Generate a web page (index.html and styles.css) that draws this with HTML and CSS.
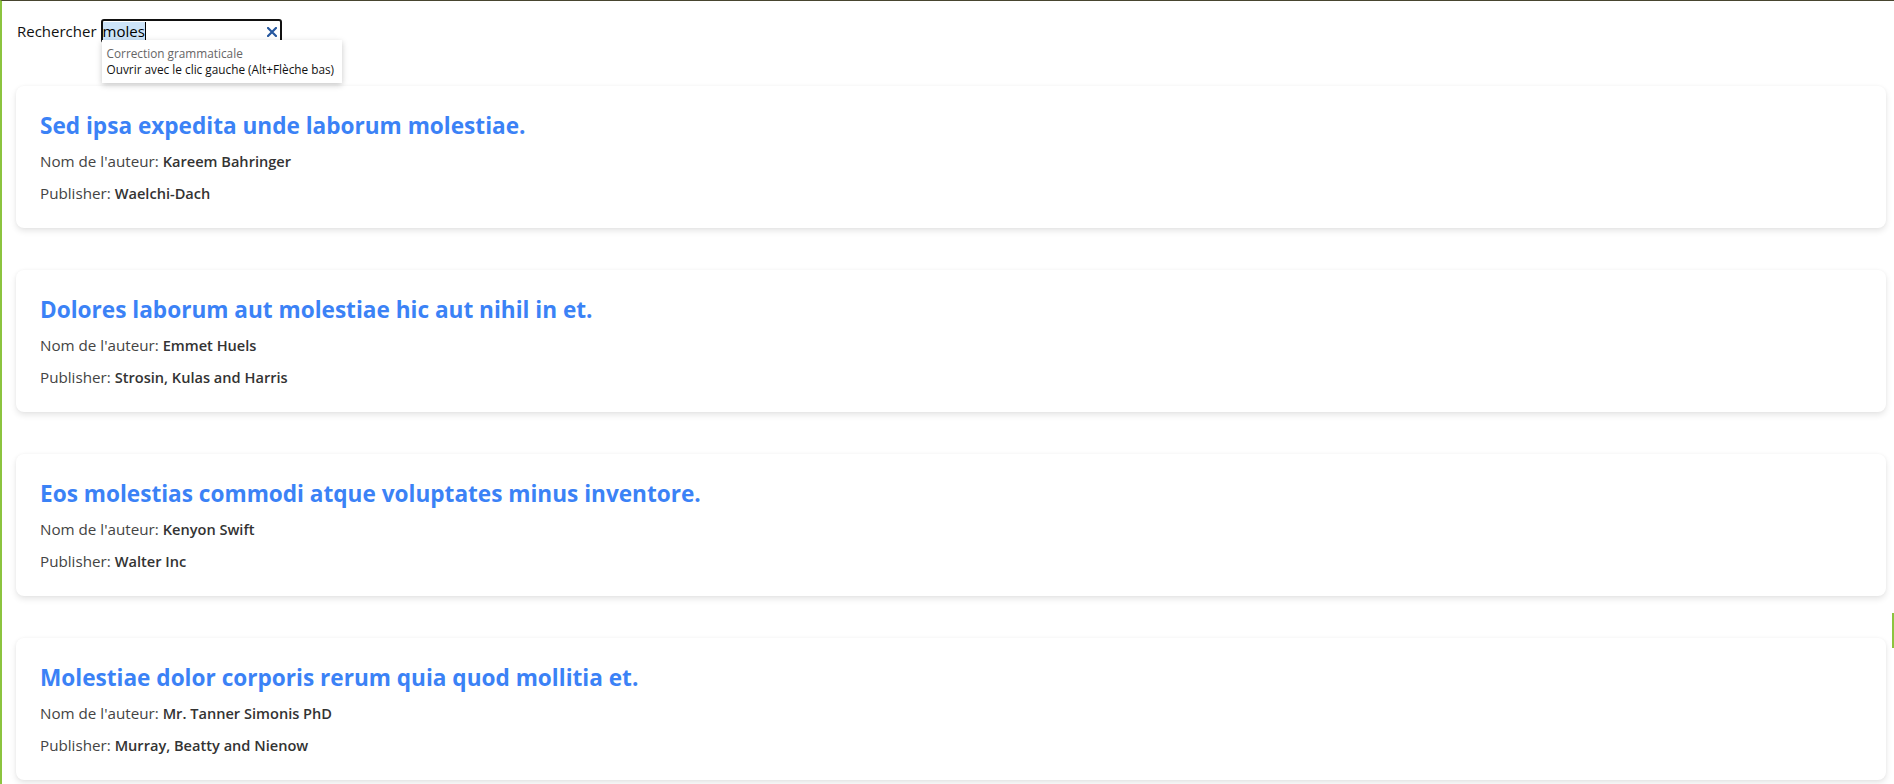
FILE: index.html
```html
<!DOCTYPE html>
<html lang="fr">
<head>
<meta charset="utf-8">
<title>Livres</title>
<link rel="stylesheet" href="styles.css">
</head>
<body>
<div class="page">
  <div class="search">
    <label class="search-label" for="q">Rechercher</label>
    <div class="input-wrap">
      <div class="input" id="q"><span class="sel">moles</span><span class="caret"></span></div>
      <span class="clear" aria-label="Effacer">
        <svg width="10" height="10" viewBox="0 0 10 10"><path d="M1 1 L9 9 M9 1 L1 9" stroke="#25579f" stroke-width="2.2" stroke-linecap="square"/></svg>
      </span>
      <div class="suggest">
        <div class="suggest-title">Correction grammaticale</div>
        <div class="suggest-item">Ouvrir avec le clic gauche (Alt+Flèche bas)</div>
      </div>
    </div>
  </div>

  <div class="list">
    <div class="card">
      <h2 class="card-title">Sed ipsa expedita unde laborum molestiae.</h2>
      <p class="card-line">Nom de l'auteur: <strong>Kareem Bahringer</strong></p>
      <p class="card-line">Publisher: <strong>Waelchi-Dach</strong></p>
    </div>
    <div class="card">
      <h2 class="card-title">Dolores laborum aut molestiae hic aut nihil in et.</h2>
      <p class="card-line">Nom de l'auteur: <strong>Emmet Huels</strong></p>
      <p class="card-line">Publisher: <strong>Strosin, Kulas and Harris</strong></p>
    </div>
    <div class="card">
      <h2 class="card-title">Eos molestias commodi atque voluptates minus inventore.</h2>
      <p class="card-line">Nom de l'auteur: <strong>Kenyon Swift</strong></p>
      <p class="card-line">Publisher: <strong>Walter Inc</strong></p>
    </div>
    <div class="card">
      <h2 class="card-title">Molestiae dolor corporis rerum quia quod mollitia et.</h2>
      <p class="card-line">Nom de l'auteur: <strong>Mr. Tanner Simonis PhD</strong></p>
      <p class="card-line">Publisher: <strong>Murray, Beatty and Nienow</strong></p>
    </div>
  </div>
</div>
<div class="edge-mark"></div>
</body>
</html>
```

FILE: styles.css
```css
* { box-sizing: border-box; }

html, body {
  margin: 0;
  padding: 0;
  height: 100%;
  overflow: hidden;
  background: #ffffff;
}

body {
  font-family: "Segoe UI", "Open Sans", "Noto Sans", sans-serif;
  color: #333;
  border-left: 2px solid #8cc43f;
  border-top: 1px solid #48452f;
}

.page {
  padding: 0 8px 0 14px;
}

.search {
  display: flex;
  align-items: center;
  padding-top: 18px;
  height: 42px;
}

.search-label {
  font-size: 15px;
  color: #111;
  margin-left: 1px;
  margin-right: 4px;
}

.input-wrap {
  position: relative;
}

.input {
  width: 181px;
  height: 24px;
  border: 2px solid #111;
  border-radius: 3px;
  padding-left: 0;
  font-size: 15px;
  line-height: 20px;
  color: #000;
  display: flex;
  align-items: center;
}

.sel {
  background: #cde4f9;
  line-height: 19px;
}

.caret {
  display: inline-block;
  width: 1px;
  height: 18px;
  background: #000;
}

.clear {
  position: absolute;
  right: 5px;
  top: 8px;
  width: 10px;
  height: 10px;
  display: flex;
}

.suggest {
  position: absolute;
  left: 1px;
  top: 21px;
  width: 240px;
  background: #fff;
  box-shadow: 0 2px 6px rgba(0, 0, 0, 0.22);
  padding: 5px 5px 6px;
  font-size: 11.8px;
  line-height: 16px;
  white-space: nowrap;
  z-index: 10;
}

.suggest-title {
  color: #666;
}

.suggest-item {
  color: #111;
}

.list {
  display: flex;
  flex-direction: column;
  gap: 42px;
  margin-top: 43px;
}

.card {
  background: #fff;
  border-radius: 8px;
  box-shadow: 0 3px 6px rgba(0, 0, 0, 0.1), 0 0 3px rgba(0, 0, 0, 0.04);
  padding: 24px 24px 23px;
}

.card-title {
  margin: 0 0 7px;
  font-size: 22.6px;
  line-height: 32px;
  font-weight: 700;
  color: #3b82f6;
}

.card-line {
  margin: 0;
  font-size: 15.2px;
  line-height: 24px;
  color: #444;
}

.card-line + .card-line {
  margin-top: 8px;
}

.card-line strong {
  font-weight: 600;
  font-size: 14.6px;
  color: #333;
}

.edge-mark {
  position: fixed;
  right: 0;
  top: 613px;
  width: 2px;
  height: 35px;
  background: #8cc43f;
}
```
